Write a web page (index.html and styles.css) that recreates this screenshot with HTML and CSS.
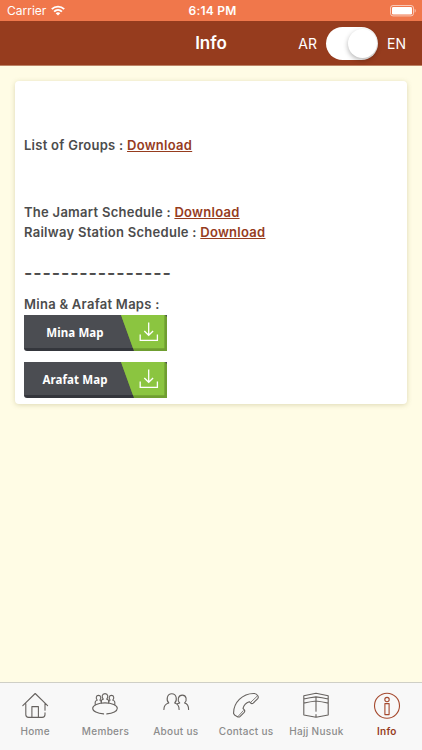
FILE: index.html
```html
<!DOCTYPE html>
<html lang="en">
<head>
    <meta charset="UTF-8">
    <meta name="viewport" content="width=device-width, initial-scale=1.0">
    <title>Info</title>
    <link rel="stylesheet" href="styles.css">
</head>
<body>
    <div class="status-bar">
        <div class="carrier">
            <span>Carrier</span>
            <svg width="14" height="11" viewBox="0 0 14 11" fill="none" stroke="#fff" stroke-width="1.9">
                <path d="M0.8 4.1a9 9 0 0 1 12.4 0M3.1 6.6a5.7 5.7 0 0 1 7.8 0"/>
                <path d="M7 10.6L4.7 8.3a3.3 3.3 0 0 1 4.600 0z" fill="#fff" stroke="none"/>
            </svg>
        </div>
        <div class="time">6:14 PM</div>
        <div class="battery">
            <svg width="26" height="12" viewBox="0 0 26 12">
                <rect x="0.5" y="0.5" width="23" height="10.4" rx="2.5" fill="none" stroke="#fff" stroke-opacity="0.6"/>
                <rect x="2" y="2" width="20" height="7.4" rx="1.2" fill="#fff"/>
                <path d="M24.6 3.8v4a2.2 2.2 0 0 0 0-4z" fill="#fff" fill-opacity="0.5"/>
            </svg>
        </div>
    </div>

    <header class="nav-bar">
        <h1>Info</h1>
        <div class="language">
            <span>AR</span>
            <div class="toggle"><div class="knob"></div></div>
            <span>EN</span>
        </div>
    </header>

    <main>
        <div class="card">
            <p class="groups">List of Groups : <a href="#">Download</a></p>
            <p>The Jamart Schedule : <a href="#">Download</a></p>
            <p>Railway Station Schedule : <a href="#">Download</a></p>
            <p class="divider">----------------</p>
            <p class="maps">Mina &amp; Arafat Maps :</p>
            <a class="map-button" href="#">
                <span class="map-label">Mina Map</span>
                <svg class="map-download" width="46" height="36" viewBox="0 0 46 36">
                    <path d="M0 0h44l2 2v34H13z" fill="#6f9e30"/>
                    <path d="M0 0h43.4v33.3H12z" fill="#8bc540"/>
                    <path d="M27.7 7.5v12.8M23.3 16l4.4 4.3 4.4-4.3M19.2 19.4v5.9h17.2v-5.9" fill="none" stroke="#fff" stroke-width="1.3"/>
                </svg>
            </a>
            <a class="map-button" href="#">
                <span class="map-label">Arafat Map</span>
                <svg class="map-download" width="46" height="36" viewBox="0 0 46 36">
                    <path d="M0 0h44l2 2v34H13z" fill="#6f9e30"/>
                    <path d="M0 0h43.4v33.3H12z" fill="#8bc540"/>
                    <path d="M27.7 7.5v12.8M23.3 16l4.4 4.3 4.4-4.3M19.2 19.4v5.9h17.2v-5.9" fill="none" stroke="#fff" stroke-width="1.3"/>
                </svg>
            </a>
        </div>
    </main>

    <nav class="tab-bar">
        <a class="tab" href="#">
            <svg class="icon" viewBox="0 0 28 28">
                <path d="M1.8 14.6L14.2 2.5l12.4 12.1M4.8 12.4v11.2q0 2.8 2.8 2.8h13.6q2.8 0 2.8-2.8v-1.8M24 12.4v6.8M10.9 26.4V15.6h6.5v10.8"/>
            </svg>
            <span>Home</span>
        </a>
        <a class="tab" href="#">
            <svg class="icon" viewBox="0 0 28 28">
                <path d="M12.6 22.9C6.4 22.7 1.7 20.2 1.7 17.2c0-3 5.5-5.3 12.3-5.3s12.3 2.3 12.3 5.3-4.3 5.4-10.5 5.7"/>
                <path d="M10.3 12v-2q0-1.400 2-1.900c-1.700-1.700-1.600-5.500 1.700-5.500s3.400 3.800 1.700 5.500q2 .5 2 1.900v2"/>
                <path d="M4.200 13.400v-2.400q0-1.300 2-1.800c-1.500-1.700-1.300-4.800 1.300-4.800s2.800 3.100 1.400 4.800q1.400.3 1.400 1.800M23.800 13.400v-2.400q0-1.300-2-1.800c1.500-1.700 1.300-4.800-1.300-4.800s-2.800 3.100-1.400 4.800q-1.400.3-1.400 1.800"/>
            </svg>
            <span>Members</span>
        </a>
        <a class="tab" href="#">
            <svg class="icon" viewBox="0 0 28 28">
                <path d="M1.9 18.500c0-4.200 1.700-5.700 4.900-6.500-2.900-2.800-1.900-9.300 3-9.300s5.700 6.500 2.900 9.300c3 .8 4.400 2.600 4.400 6.500"/>
                <path d="M15.3 12.800l2.400-.8c-2.700-2.700-1.700-7.900 2.600-7.900s5 5.200 2.300 7.900c2.800.7 4 2.600 4 6.500"/>
            </svg>
            <span>About us</span>
        </a>
        <a class="tab" href="#">
            <svg class="icon" viewBox="0 0 28 28">
                <path d="M1.600 22.500C1.300 12 10.300 2.200 22.300 2.500q2.100.1 3.500 2.200 1.100 1.700-.3 3.200l-4.300 4.200q-1.300 1-2.500-.1l-1.400-1.300c-2.900.9-5.400 3.400-6.300 6.600l1.300 1.500q1 1.300-.1 2.500l-4 4q-1.400 1.300-3.200.2-2.900-1.200-3.400-3z"/>
                <path class="thin" d="M19.200 10.800l6-5.700M6.200 25.300l5-5.600"/>
            </svg>
            <span>Contact us</span>
        </a>
        <a class="tab" href="#">
            <svg class="icon" viewBox="0 0 28 28">
                <path d="M1.800 4.800L14 2.300l12.200 2.500v19.200L14 26.200 1.800 24zM14 5.900v14.300M14 23.600v2.400M1.800 8Q8 6.600 14 5.900q6 .7 12.200 2.100M1.800 12.100Q8 10.700 14 10q6 .7 12.200 2.100"/>
            </svg>
            <span>Hajj Nusuk</span>
        </a>
        <a class="tab active" href="#">
            <svg class="icon" viewBox="0 0 28 28">
                <circle cx="14" cy="14.8" r="12.5"/>
                <circle cx="14" cy="8.6" r="2.2"/>
                <rect x="11.900" y="12.6" width="4.2" height="11"/>
            </svg>
            <span>Info</span>
        </a>
    </nav>
</body>
</html>
```

FILE: styles.css
```css
* {
    box-sizing: border-box;
}
body {
    display: flex;
    flex-direction: column;
    height: 750px;
    margin: 0;
    font-family: Inter, "Liberation Sans", sans-serif;
    background-color: #fffce5;
}
a {
    color: #963c1e;
}
.status-bar {
    display: grid;
    grid-template-columns: 1fr auto 1fr;
    align-items: center;
    height: 21px;
    padding: 0 6px 0 7px;
    background-color: #f0774b;
    color: #fff;
    font-size: 12px;
}
.carrier {
    display: flex;
    align-items: center;
    gap: 5px;
}
.time {
    padding-left: 2px;
    font-weight: 600;
    letter-spacing: 0.2px;
}
.battery {
    display: flex;
    justify-content: flex-end;
}
.nav-bar {
    display: grid;
    grid-template-columns: 1fr auto 1fr;
    align-items: center;
    height: 45px;
    border-bottom: 1px solid #bd8365;
    background-color: #963c1e;
    color: #fff;
}
h1 {
    grid-column: 2;
    margin: 0;
    font-size: 17px;
    font-weight: 600;
}
.language {
    display: flex;
    align-items: center;
    justify-content: flex-end;
    gap: 9px;
    padding-right: 16px;
    font-size: 14px;
}
.toggle {
    display: flex;
    justify-content: flex-end;
    width: 52px;
    height: 33px;
    padding: 2px 1px;
    border-radius: 17px;
    background-color: #fff;
}
.knob {
    width: 29px;
    height: 29px;
    border-radius: 50%;
    background-color: #fff;
    box-shadow: 0 2px 5px rgba(0, 0, 0, 0.3);
}
main {
    flex: 1;
    padding: 15px;
}
.card {
    height: 323px;
    padding: 54px 9px 0;
    border-radius: 4px;
    background-color: #fff;
    box-shadow: 0 1px 5px rgba(120, 110, 40, 0.25);
    color: #4c4c4c;
    font-size: 13px;
    font-weight: 600;
    letter-spacing: 0.27px;
    line-height: 20.5px;
}
.card p {
    margin: 0;
}
.card .groups {
    margin-bottom: 46px;
}
.card .divider {
    margin-top: 20px;
    font-size: 18px;
    letter-spacing: 0.85px;
}
.card .maps {
    margin-top: 11px;
}
.map-button {
    display: flex;
    width: 143px;
    height: 36px;
    margin-bottom: 11px;
    background: linear-gradient(#4b4d52 33px, #34363c 33px);
    border-bottom-left-radius: 3px;
    color: #fff;
    text-decoration: none;
}
.map-label {
    width: 97px;
    padding-left: 5px;
    font-family: "Noto Sans", sans-serif;
    font-size: 11.5px;
    font-weight: 700;
    letter-spacing: 0.1px;
    line-height: 35px;
    text-align: center;
}
.tab-bar {
    display: grid;
    grid-template-columns: repeat(6, 1fr);
    height: 68px;
    border-top: 1px solid #cfcfc6;
    background-color: #f8f8f8;
}
.tab {
    display: flex;
    flex-direction: column;
    align-items: center;
    padding-top: 8px;
    color: #8c8c8c;
    font-size: 10px;
    font-weight: 500;
    letter-spacing: 0.3px;
    line-height: 14px;
    text-decoration: none;
    white-space: nowrap;
}
.tab span {
    margin-top: 5px;
}
.icon {
    width: 28px;
    height: 28px;
    fill: none;
    stroke: #66625f;
    stroke-width: 1.1;
    stroke-linecap: round;
    stroke-linejoin: round;
}
.thin {
    stroke-width: 0.8;
}
.active {
    color: #963c1e;
    font-weight: 600;
}
.active .icon {
    stroke: #a5492e;
}
```
